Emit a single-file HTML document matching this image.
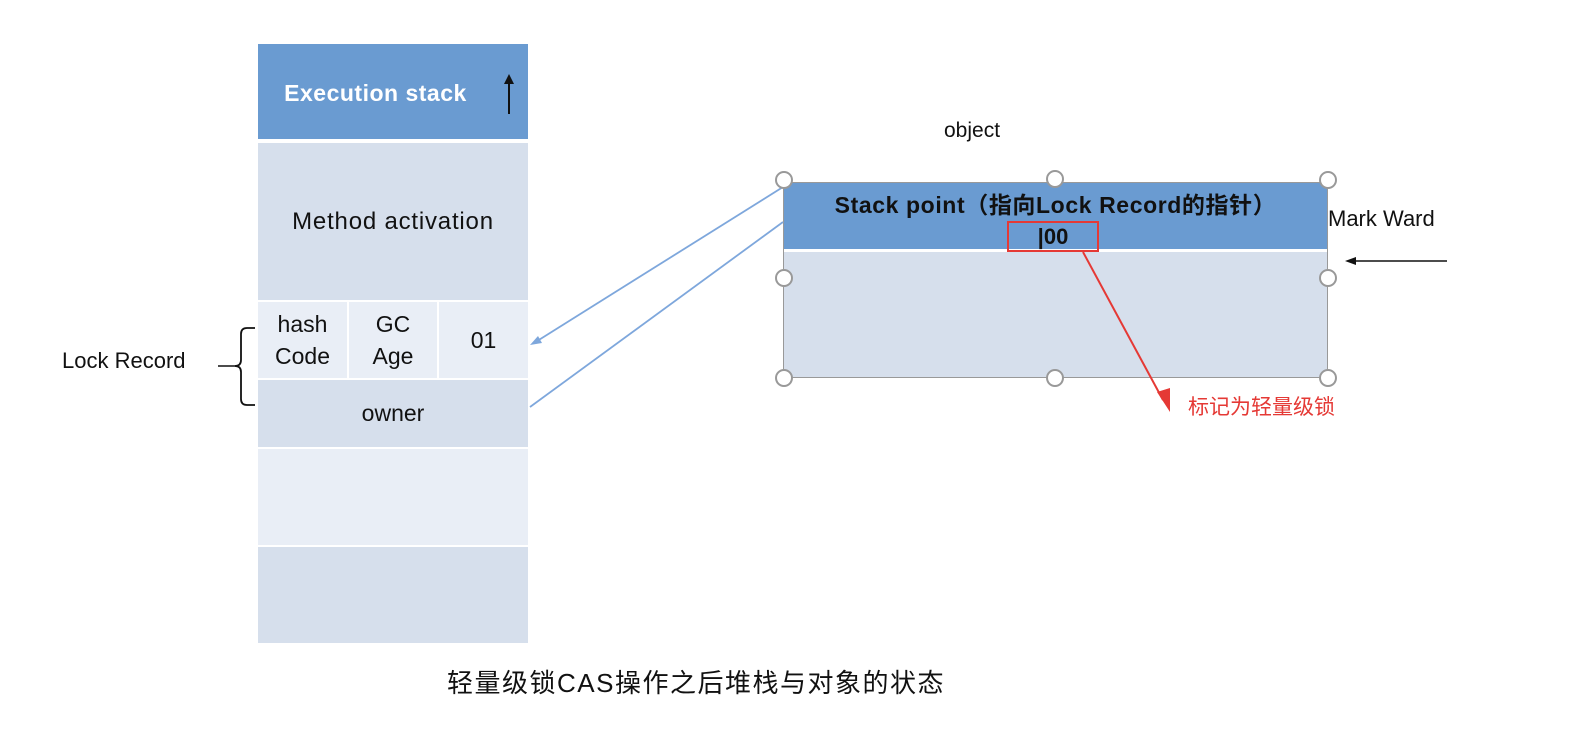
<!DOCTYPE html>
<html><head><meta charset="utf-8"><style>
body{margin:0;width:1582px;height:740px;background:#fff;position:relative;overflow:hidden;font-family:"Liberation Sans","Noto Sans CJK SC",sans-serif;color:#111}
.a{position:absolute;box-sizing:border-box}
.c{display:flex;align-items:center;justify-content:center;text-align:center}
</style></head><body>
<div class="a c" style="left:258px;top:44px;width:270px;height:95px;background:#6a9bd1;color:#fff;font-weight:bold;font-size:23px;letter-spacing:0.5px;padding-right:35px;padding-top:4px">Execution stack</div>
<div class="a c" style="left:258px;top:143px;width:270px;height:157px;background:#d6dfec;font-size:24px;letter-spacing:0.8px">Method activation</div>
<div class="a c" style="left:258px;top:302px;width:89px;height:76px;background:#e9eef6;font-size:23px;line-height:32px">hash<br>Code</div>
<div class="a c" style="left:349px;top:302px;width:88px;height:76px;background:#e9eef6;font-size:23px;line-height:32px">GC<br>Age</div>
<div class="a c" style="left:439px;top:302px;width:89px;height:76px;background:#e9eef6;font-size:23px">01</div>
<div class="a c" style="left:258px;top:380px;width:270px;height:67px;background:#d6dfec;font-size:23px">owner</div>
<div class="a" style="left:258px;top:449px;width:270px;height:96px;background:#e9eef6"></div>
<div class="a" style="left:258px;top:547px;width:270px;height:96px;background:#d6dfec"></div>
<div class="a" style="left:62px;top:348px;font-size:22px">Lock Record</div>
<div class="a" style="left:944px;top:119px;font-size:21px">object</div>
<div class="a" style="left:783px;top:182px;width:545px;height:196px;border:1.5px solid #999;background:#d6dfec"></div>
<div class="a" style="left:784px;top:183px;width:543px;height:69px;background:#6a9bd1;border-bottom:3px solid #fff"></div>
<div class="a" style="left:784px;top:186px;width:543px;text-align:center;font-size:23px;font-weight:bold;letter-spacing:0.6px">Stack point（指向Lock Record的指针）</div>
<div class="a" style="left:1007px;top:221px;width:92px;height:31px;border:2px solid #e53935;text-align:center;font-size:22px;font-weight:bold;line-height:27px">|00</div>
<div class="a" style="left:1328px;top:206px;font-size:22px">Mark Ward</div>
<div class="a" style="left:1188px;top:391px;font-size:21px;color:#e53935">标记为轻量级锁</div>
<div class="a" style="left:447px;top:663px;font-size:26px;letter-spacing:1.5px;white-space:nowrap">轻量级锁CAS操作之后堆栈与对象的状态</div>
<svg class="a" style="left:0;top:0" width="1582" height="740">
<g stroke="#111" stroke-width="2" fill="none">
<line x1="509" y1="114" x2="509" y2="80"/>
<path d="M504 84 L509 74 L514 84" fill="#111" stroke="none"/>
<path d="M255 328 H247 Q241 328 241 334 V360 Q241 366 235 366 Q241 366 241 372 V399 Q241 405 247 405 H255" stroke-width="1.8"/>
<line x1="218" y1="366" x2="236" y2="366" stroke-width="1.5"/>
<line x1="1447" y1="261" x2="1350" y2="261" stroke-width="1.5"/>
<path d="M1356 257 L1345 261 L1356 265" fill="#111" stroke="none"/>
</g>
<g stroke="#7ea7dc" stroke-width="1.8" fill="none">
<line x1="783" y1="187" x2="534" y2="343"/>
<line x1="783" y1="222" x2="530" y2="407"/>
</g>
<path d="M530 345 L538 336 L542 343 Z" fill="#7ea7dc"/>
<line x1="1083" y1="252" x2="1163" y2="400" stroke="#e53935" stroke-width="2"/>
<path d="M1157 392 L1170 412 L1170 388 Z" fill="#e53935"/>
<g fill="#fff" stroke="#999" stroke-width="2">
<circle cx="784" cy="180" r="8"/><circle cx="1055" cy="179" r="8"/><circle cx="1328" cy="180" r="8"/>
<circle cx="784" cy="278" r="8"/><circle cx="1328" cy="278" r="8"/>
<circle cx="784" cy="378" r="8"/><circle cx="1055" cy="378" r="8"/><circle cx="1328" cy="378" r="8"/>
</g>
</svg>
</body></html>
